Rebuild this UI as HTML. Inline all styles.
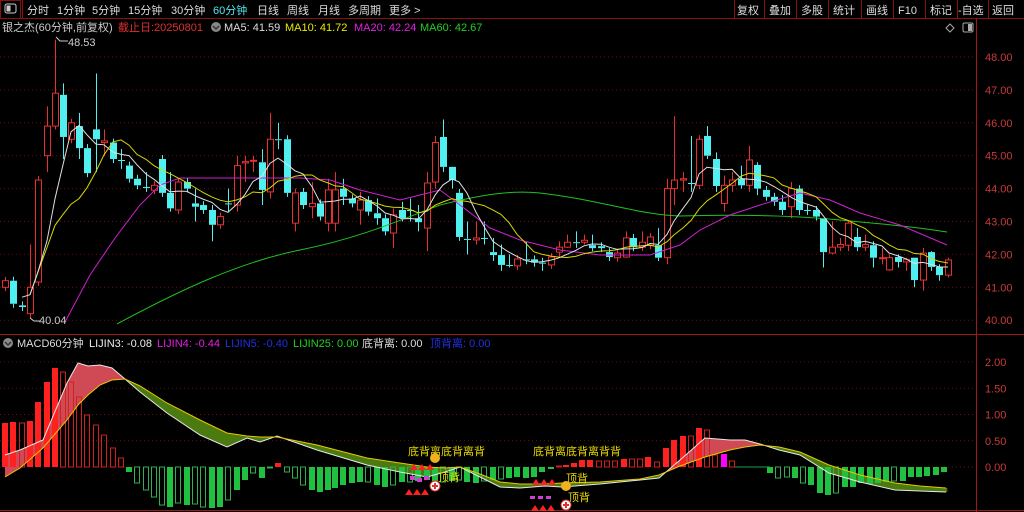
<!DOCTYPE html>
<html><head><meta charset="utf-8">
<style>
body{margin:0;background:#000;width:1024px;height:512px;overflow:hidden;font-family:"Liberation Sans","Noto Sans CJK SC",sans-serif;}
svg{position:absolute;left:0;top:0}
text{font-family:"Liberation Sans","Noto Sans CJK SC",sans-serif;font-size:11px}
</style></head><body>
<svg id="s" width="1024" height="512" viewBox="0 0 1024 512">
<rect width="1024" height="512" fill="#000"/>
<line x1="0" y1="18.5" x2="1024" y2="18.5" stroke="#8a1010"/>
<rect x="0.5" y="0.5" width="20" height="18" fill="none" stroke="#8a1010"/>
<rect x="5" y="4" width="11" height="9" rx="2" fill="none" stroke="#ccc"/>
<rect x="6.5" y="5.5" width="4" height="6" fill="#ccc"/>
<line x1="22.5" y1="0" x2="22.5" y2="18" stroke="#8a1010"/>
<g fill="#ddd">
<text x="27" y="14">分时</text><text x="57" y="14">1分钟</text><text x="92" y="14">5分钟</text><text x="128" y="14">15分钟</text><text x="171" y="14">30分钟</text><text x="213" y="14" fill="#4fe8f0">60分钟</text><text x="257" y="14">日线</text><text x="287" y="14">周线</text><text x="318" y="14">月线</text><text x="348" y="14">多周期</text><text x="389" y="14">更多 &gt;</text>
<text x="737" y="14">复权</text><text x="769" y="14">叠加</text><text x="801" y="14">多股</text><text x="833" y="14">统计</text><text x="866" y="14">画线</text><text x="898" y="14">F10</text><text x="930" y="14">标记</text><text x="958" y="14">-自选</text><text x="992" y="14">返回</text>
</g>
<g stroke="#8a1010"><line x1="734.5" y1="0" x2="734.5" y2="18"/><line x1="764.5" y1="0" x2="764.5" y2="18"/><line x1="796.5" y1="0" x2="796.5" y2="18"/><line x1="828.5" y1="0" x2="828.5" y2="18"/><line x1="861.5" y1="0" x2="861.5" y2="18"/><line x1="893.5" y1="0" x2="893.5" y2="18"/><line x1="925.5" y1="0" x2="925.5" y2="18"/><line x1="957.5" y1="0" x2="957.5" y2="18"/><line x1="988.5" y1="0" x2="988.5" y2="18"/></g>
<line x1="976.5" y1="19" x2="976.5" y2="512" stroke="#a01818"/>
<line x1="0" y1="334.5" x2="1024" y2="334.5" stroke="#a01818"/>
<line x1="0" y1="510.5" x2="1024" y2="510.5" stroke="#a01818"/>
<path d="M950 24 l4 4 l-4 4 l-4 -4z" fill="none" stroke="#aaa"/>
<rect x="963" y="23" width="10" height="9" rx="1.5" fill="none" stroke="#aaa"/><rect x="968" y="24" width="4" height="7" fill="#aaa"/>
<g id="grid"></g>
<text x="2" y="31" fill="#ccc">银之杰(60分钟,前复权)</text>
<text x="118" y="31" fill="#e03030">截止日:20250801</text>
<circle cx="216" cy="27" r="5" fill="#888"/><path d="M213 26 l3 3 l3 -3" stroke="#333" fill="none" stroke-width="1.5"/>
<text x="224" y="31" fill="#ddd">MA5: 41.59</text>
<text x="285" y="31" fill="#e8e800">MA10: 41.72</text>
<text x="354" y="31" fill="#e020e0">MA20: 42.24</text>
<text x="420" y="31" fill="#20d020">MA60: 42.67</text>
<circle cx="8" cy="343" r="5" fill="#888"/><path d="M5 342 l3 3 l3 -3" stroke="#333" fill="none" stroke-width="1.5"/>
<text x="17" y="347" fill="#ddd">MACD60分钟</text>
<text x="89" y="347" fill="#eee">LIJIN3: -0.08</text>
<text x="157" y="347" fill="#e020e0">LIJIN4: -0.44</text>
<text x="225" y="347" fill="#2030e0">LIJIN5: -0.40</text>
<text x="293" y="347" fill="#20d020">LIJIN25: 0.00</text>
<text x="362" y="347" fill="#ddd">底背离: 0.00</text>
<text x="430" y="347" fill="#2030e0">顶背离: 0.00</text>
<g id="main"></g>
<g id="macd"></g>
<path d="M56 37 l4 4 l8 0" stroke="#ccc" fill="none"/><text x="68" y="46" fill="#ccc">48.53</text>
<path d="M30 318 l4 3 l6 0" stroke="#ccc" fill="none"/><text x="39" y="324" fill="#ccc">40.04</text>
<g font-size="10">
<text x="408" y="455" fill="#e8d800">底背离底背离背</text>
<text x="533" y="455" fill="#e8d800">底背离底背离背背</text>
<text x="438" y="481" fill="#e8d800">顶背</text>
<text x="566" y="482" fill="#e8d800">顶背</text>
<text x="568" y="501" fill="#e8d800">顶背</text>
</g>
<g fill="#ff2020"><path d="M405 495 l4 -6 l4 6z M413 495 l4 -6 l4 6z M421 495 l4 -6 l4 6z M531 511 l4 -6 l4 6z M539 511 l4 -6 l4 6z M547 511 l4 -6 l4 6z"/>
<path d="M410 470 l4 -6 l4 6z M418 470 l4 -6 l4 6z M426 470 l4 -6 l4 6z M532 485 l4 -6 l4 6z M540 485 l4 -6 l4 6z M548 485 l4 -6 l4 6z"/></g>
<g fill="#d040d0"><rect x="410" y="476" width="5" height="4"/><rect x="417" y="478" width="5" height="4"/><rect x="424" y="476" width="5" height="4"/><rect x="530" y="496" width="5" height="3"/><rect x="538" y="496" width="5" height="3"/><rect x="546" y="496" width="5" height="3"/></g>
<circle cx="435" cy="486" r="5" fill="#fff" stroke="#e03030"/><path d="M432 486h6M435 483v6" stroke="#e03030" stroke-width="2"/>
<circle cx="566" cy="505" r="5" fill="#fff" stroke="#e03030"/><path d="M563 505h6M566 502v6" stroke="#e03030" stroke-width="2"/>
<circle cx="435" cy="458" r="5" fill="#f0b020"/><circle cx="566" cy="486" r="5" fill="#f0b020"/>
</svg>
<script>
function Y(p){return 57+(48-p)*32.9;}
var g='';
for(var p=40;p<=48;p++){var y=Y(p);g+='<line x1="0" y1="'+y+'" x2="976" y2="'+y+'" stroke="#6a1010" stroke-dasharray="1,3"/><text x="985" y="'+(y+4)+'" fill="#c83a3a">'+p.toFixed(2)+'</text>';}
var macdY=function(v){return 467-v*52.5;};
[0,0.5,1,1.5,2].forEach(function(v){var y=macdY(v);g+='<line x1="0" y1="'+y+'" x2="976" y2="'+y+'" stroke="#6a1010" stroke-dasharray="1,3"/><text x="985" y="'+(y+4)+'" fill="#c83a3a">'+v.toFixed(2)+'</text>';});
document.getElementById('grid').innerHTML=g;
var D=[[5,41.0,41.2],[13,41.2,40.5],[22,40.45,40.4],[30,40.2,41.0,42.3,40.04],[38,41.16,44.26],[47,45.0,45.9,46.5,44.5],[55,45.9,46.9,48.53,45.8],[63,46.85,45.57,47.2,44.9],[71,45.5,46.0],[79,45.9,45.23,46.3,44.9],[87,45.23,44.47],[96,45.8,45.5,47.5,44.5],[104,45.4,45.45,45.8,45.0],[113,45.4,44.9],[121,44.87,44.87,45.2,44.6],[129,44.7,44.3],[137,44.3,44.1],[146,44.05,44.05,44.5,43.9],[154,43.95,44.1],[162,44.9,43.87],[170,43.87,43.4,44.5,43.3],[178,43.35,44.2],[187,44.2,44.0],[195,43.55,43.45,44.0,43.0],[203,43.5,43.35],[212,43.35,42.9,43.5,42.4],[220,42.9,43.15],[228,43.55,43.55,44.0,43.3],[237,43.5,44.7,45.0,43.3],[245,44.78,44.82,45.0,44.2],[253,44.84,44.86,45.0,44.5],[262,44.8,43.96,45.2,43.5],[270,43.9,45.5,46.3,43.7],[278,45.5,45.5,46.0,45.2],[287,45.5,43.87],[295,42.95,43.87,44.0,42.7],[303,43.9,43.5],[312,43.45,43.55,44.2,43.1],[320,43.55,43.15],[328,42.95,43.96,44.3,42.7],
[335,42.95,43.96,44.5,42.7],[343,44.0,43.75,44.3,43.5],[352,43.7,43.55],[360,43.35,43.65,43.9,42.9],[368,43.65,43.3],[377,43.25,43.1,43.7,42.9],[385,43.1,42.7],[393,42.65,43.2,43.4,42.2],[402,43.35,43.1,43.6,43.0],[410,43.35,43.35,43.7,43.0],[418,43.1,42.98,43.5,42.7],[427,42.8,44.17,44.5,42.1],[435,44.2,45.4,45.6,44.0],[443,45.57,44.66,46.1,44.5],[452,44.66,44.26,44.6,44.0],[459,43.87,42.53],[467,42.47,42.47,43.0,42.0],[476,42.44,42.5,43.0,42.3],[484,42.5,42.5,43.0,42.3],[493,42.07,41.98,42.5,41.8],[501,41.98,41.68,42.3,41.5],[509,41.68,41.68,42.0,41.6],[517,41.65,41.86],[526,41.85,41.85,42.4,41.7],[534,41.85,41.75],[542,41.75,41.75,41.9,41.5],[551,41.68,41.92],[559,42.07,42.22,42.4,41.9],[567,42.22,42.37,42.6,42.2],[576,42.37,42.37,42.7,42.2],[584,42.37,42.43,42.6,42.3],[592,42.28,42.19,42.6,42.1],[601,42.25,42.19],[609,42.07,41.92],[617,41.9,42.04],[626,41.92,42.5,42.7,41.9],[633,42.5,42.22],[642,42.22,42.37,42.7,42.1],[650,42.28,42.53],[658,42.28,41.9,42.8,41.8],
[667,41.9,44.0,44.3,41.7],[674,44.0,44.26,46.2,43.5],[683,44.26,44.3,44.5,43.9],[691,44.17,44.17,45.6,43.9],[699,44.1,45.5],[707,45.6,45.0,45.9,44.9],[716,44.9,44.08,45.1,43.9],[724,43.55,44.1,44.4,43.3],[732,44.1,44.26,44.5,43.9],[741,44.3,44.1,44.7,44.0],[749,44.1,44.87,45.3,43.9],[757,44.72,44.0,44.8,43.8],[766,43.96,43.75],[774,43.75,43.6],[782,43.6,43.35,43.8,43.2],[791,43.45,44.0,44.2,43.1],[799,44.0,43.35,44.1,43.2],[807,43.35,43.35,43.5,43.2],[816,43.35,43.15],[823,43.1,42.07,43.1,41.6],[832,42.04,42.22,43.0,42.0],[840,42.22,42.3,42.5,42.1],[848,42.28,42.95,43.0,42.1],[857,42.53,42.22,42.8,42.1],[865,42.22,42.3,42.6,42.1],[873,42.28,41.9,42.4,41.6],[882,41.87,41.9,42.2,41.7],[889,41.53,41.9,42.0,41.5],[898,41.92,41.77,42.0,41.6],[906,41.77,41.85,41.9,41.5],[914,41.9,41.22,41.9,41.0],[923,41.22,42.04,42.2,40.9],[931,42.07,41.62,42.1,41.5],[939,41.62,41.37,41.7,41.2],[948,41.37,41.83,41.9,41.3]];
var m='';
D.forEach(function(d){var x=d[0],o=d[1],c=d[2];var h=d[3]||Math.max(o,c)+0.12,l=d[4]||Math.min(o,c)-0.12;
var up=c>o,col=up?'#e83030':'#50f0f0';var t=Y(Math.max(o,c)),b=Y(Math.min(o,c));if(b-t<1)b=t+1;
m+='<line x1="'+(x+0.5)+'" y1="'+Y(h)+'" x2="'+(x+0.5)+'" y2="'+t+'" stroke="'+col+'"/><line x1="'+(x+0.5)+'" y1="'+b+'" x2="'+(x+0.5)+'" y2="'+Y(l)+'" stroke="'+col+'"/>';
if(up)m+='<rect x="'+(x-2.5)+'" y="'+t+'" width="6" height="'+(b-t)+'" fill="#000" stroke="'+col+'"/>';
else m+='<rect x="'+(x-3)+'" y="'+t+'" width="7" height="'+(b-t)+'" fill="'+col+'"/>';});
function ma(n,col,start){var pts=[];for(var i=start;i<D.length;i++){var s=0,k=0;for(var j=Math.max(0,i-n+1);j<=i;j++){s+=D[j][2];k++;}pts.push(D[i][0]+','+Y(s/k).toFixed(1));}
return '<polyline points="'+pts.join(' ')+'" fill="none" stroke="'+col+'" stroke-width="1"/>';}
m+='<path d="M117 324 C180 290 240 262 300 250 C360 238 400 220 440 205 C480 195 510 190 540 193 C600 200 640 215 680 216 C740 214 800 216 840 220 C880 224 910 226 947 232" fill="none" stroke="#20c020"/>';
m+='<polyline points="65,322 90,275 115,238 140,205 160,185 180,178 230,178 300,178 330,180 360,190 400,200 420,195 440,190 460,205 490,228 520,240 560,250 600,255 650,255 680,245 700,230 730,215 760,205 800,193 830,200 860,213 900,225 947,245" fill="none" stroke="#d020d0"/>';
m+=ma(10,'#d8d800',3)+ma(5,'#e0e0e0',2);
document.getElementById('main').innerHTML=m;
var H=[[5,423],[13,422],[22,423,1],[30,421],[38,402],[47,382],[55,368],[63,372,1],[71,382,1],[79,397,1],[87,415,1],[96,425,1],[104,435,1],[113,448,1],[121,458,1],[129,472],[137,483,1],[146,490,1],[154,497,1],[162,505,1],[170,507],[178,503,1],[187,505],[195,504,1],[203,507,1],[212,508],[220,507],[228,500,1],[237,490],[245,480],[253,473,1],[262,478],[270,468,1],[278,463],[287,472,1],[295,478,1],[303,485,1],[312,490],[320,492],[328,490],[335,488],[343,485],[352,483],[360,482],[368,482,1],[377,485],[385,487],[393,485,1],[402,482],[410,482,1],[418,481],[427,480],[435,481],[443,482,1],[452,481],[459,480,1],[467,482],[476,483],[484,481,1],[493,480],[501,479,1],[509,478],[517,477],[526,478],[534,477],[542,472],[551,469],[559,466,1],[566,465],[574,463],[582,460],[590,460],[599,461,1],[607,461,1],[615,461,1],[624,459],[632,459,1],[640,459,1],[648,457],[657,462,1],[666,448],[674,440],[683,436],[691,436,1],[699,428],[707,430,1],[715,455,1],[724,454,2],[732,461,1],[770,473],[778,478,1],[787,477,1],[795,478],[803,483,1],[811,485],[820,493],[828,495],[836,493,1],[845,487],[853,487],[861,483],[870,484],[878,483],[886,482],[894,481,1],[903,481],[911,477],[919,477],[927,476],[936,475],[944,472]];
var q='';
H.forEach(function(h){var x=h[0],y=h[1],Z=467;var red=y<Z;var col=h[2]==2?'#ff00ff':(red?'#ff2020':'#20c040');
var t=Math.min(y,Z),b=Math.max(y,Z);
if(h[2]==1)q+='<rect x="'+(x-2.5)+'" y="'+t+'" width="5" height="'+(b-t)+'" fill="none" stroke="'+(red?'#d02020':'#30b050')+'"/>';
else q+='<rect x="'+(x-3)+'" y="'+t+'" width="6" height="'+(b-t)+'" fill="'+col+'"/>';});
q+='<line x1="735" y1="467" x2="770" y2="467" stroke="#20a040"/>';
var X=[5,20,43,67,78,88,100,112,125,140,167,200,227,247,260,277,317,367,400,427,445,460,480,500,520,545,562,600,640,659,680,705,730,745,760,779,800,829,860,895,920,946];
var W=[455,450,440,383,363,366,365,368,379,392,413,435,447,438,442,436,450,465,472,477,472,467,477,487,488,486,487,484,480,478,460,438,440,440,444,450,455,473,482,490,491,492];
var Yl=[477,468,448,420,405,395,385,380,379,386,403,420,433,436,437,437,445,458,463,467,468,467,474,482,484,484,483,482,479,475,466,457,450,447,445,447,452,465,475,483,486,488];
function interp(xs,ys,x){for(var i=0;i<xs.length-1;i++){if(x>=xs[i]&&x<=xs[i+1]){var t=(x-xs[i])/(xs[i+1]-xs[i]);return ys[i]+t*(ys[i+1]-ys[i]);}}return ys[ys.length-1];}
var f='';
for(var x=5;x<946;x+=2){var w0=interp(X,W,x),w1=interp(X,W,x+2),y0=interp(X,Yl,x),y1=interp(X,Yl,x+2);
var col=(w0+w1)<(y0+y1)?'#d04a55':'#4a7a10';
f+='<polygon points="'+x+','+w0+' '+(x+2.3)+','+w1+' '+(x+2.3)+','+y1+' '+x+','+y0+'" fill="'+col+'"/>';}
q=f+q;
q+='<polyline points="'+X.map(function(x,i){return x+','+W[i];}).join(' ')+'" fill="none" stroke="#e8e8e8"/>';
q+='<polyline points="'+X.map(function(x,i){return x+','+Yl[i];}).join(' ')+'" fill="none" stroke="#e8c800"/>';
document.getElementById('macd').innerHTML=q;
</script>
</body></html>
